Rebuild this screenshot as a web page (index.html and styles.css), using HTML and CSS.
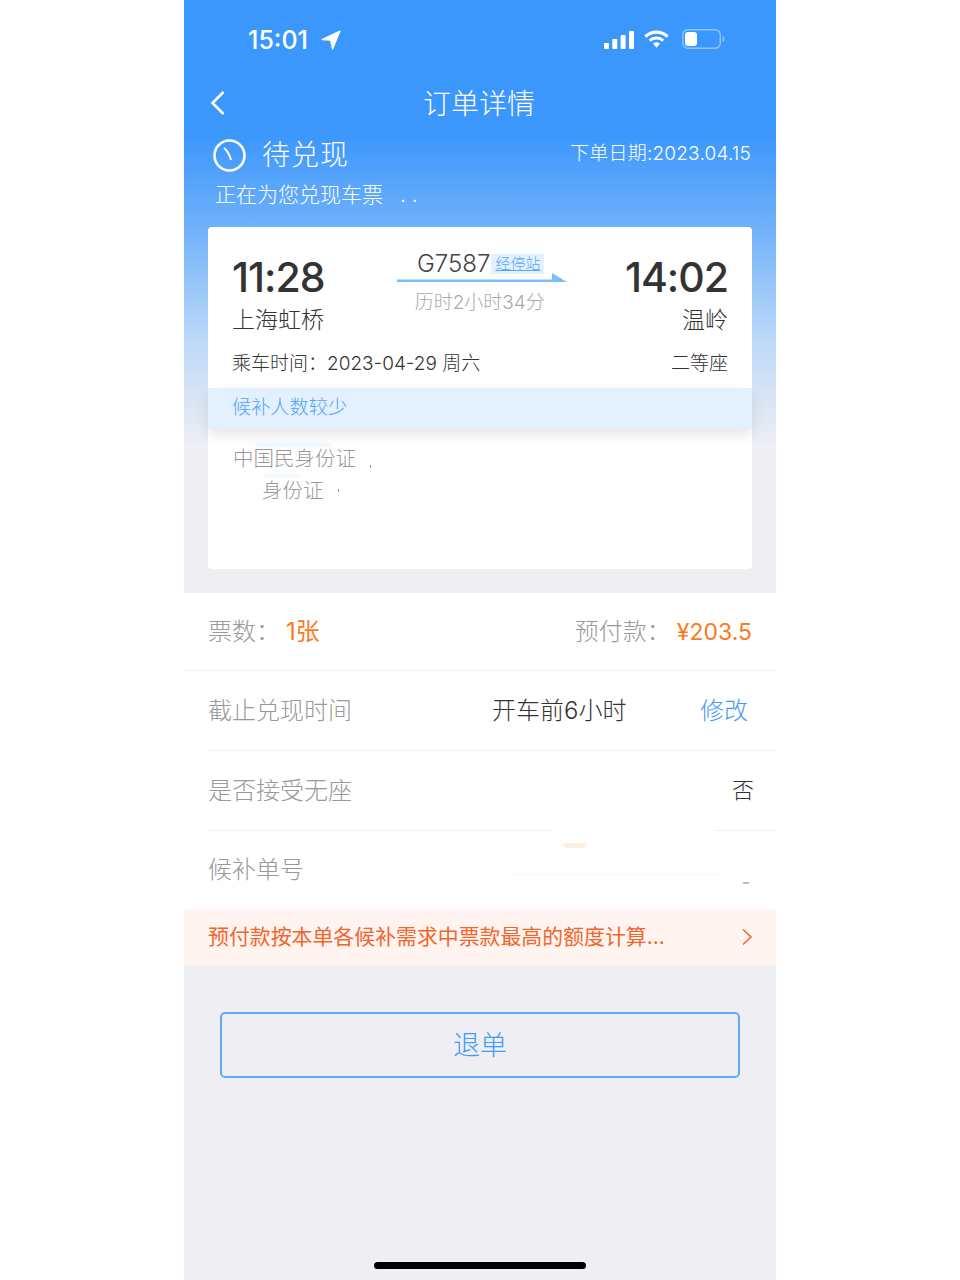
FILE: index.html
```html
<!DOCTYPE html>
<html lang="zh-CN">
<head>
  <meta charset="UTF-8">
  <title>订单详情</title>
  <link rel="stylesheet" href="styles.css">
</head>
<body>
  <div class="phone">
    <div class="status-bar">
      <div class="status-left">
        <span class="clock">15:01</span>
        <svg class="loc" width="20" height="20" viewBox="0 0 20 20"><path d="M19 1 1 9.600l8.600.6L11.600 19z" fill="#fff" stroke="#fff" stroke-width="1.200" stroke-linejoin="round"/></svg>
      </div>
      <div class="status-right">
        <svg class="signal" width="30" height="19" viewBox="0 0 30 19"><g fill="#fff"><rect x="0" y="13" width="5" height="6" rx="1"/><rect x="8.300" y="9" width="5" height="10" rx="1"/><rect x="16.600" y="5" width="5" height="14" rx="1"/><rect x="25" y="1" width="5" height="18" rx="1"/></g></svg>
        <svg class="wifi" width="25" height="20" viewBox="0 0 26 20"><g fill="none" stroke="#fff" stroke-width="3.200"><path d="M1.500 7.500C8 1.300 18 1.300 24.500 7.500"/><path d="M6 11.600c3.900-3.500 10.100-3.500 14 0"/></g><path d="M9.400 14.600c2.200-1.800 5-1.800 7.200 0L13 19z" fill="#fff"/></svg>
        <svg width="43" height="20" viewBox="0 0 43 20"><rect x=".7" y=".7" width="37.600" height="18.600" rx="5" fill="none" stroke="#8fc3fb" stroke-width="1.400"/><rect x="3" y="3" width="12" height="14" rx="3" fill="#fff"/><path d="M40.500 7v6c1.200-.4 2-1.600 2-3s-.8-2.600-2-3z" fill="#8fc3fb"/></svg>
      </div>
    </div>

    <div class="nav">
      <svg class="back" width="16" height="26" viewBox="0 0 16 26"><path d="M13.500 2 2.500 13l11 11" fill="none" stroke="#fff" stroke-width="2.600"/></svg>
      <h1>订单详情</h1>
    </div>

    <div class="order-state">
      <div class="state-left">
        <svg width="33" height="33" viewBox="0 0 33 33"><circle cx="16.500" cy="16.500" r="15" fill="none" stroke="#fff" stroke-width="2.600"/><path d="M11 9c3.200 2.600 5.500 6.500 7 12" fill="none" stroke="#fff" stroke-width="2"/></svg>
        <span class="state-name">待兑现</span>
      </div>
      <span class="order-date">下单日期:2023.04.15</span>
    </div>
    <p class="state-note">正在为您兑现车票 <span class="dots">. .</span></p>

    <div class="ticket">
      <div class="route">
        <div class="stop">
          <div class="time">11:28</div>
          <div class="station">上海虹桥</div>
        </div>
        <div class="train">
          <div class="train-no"><span>G7587</span><span class="stops">经停站</span></div>
          <svg class="arrow" width="170" height="10" viewBox="0 0 170 10"><path d="M0 6.500h155V0l15 9H0z" fill="#7dbcfb"/></svg>
          <div class="duration">历时2小时34分</div>
        </div>
        <div class="stop stop-end">
          <div class="time">14:02</div>
          <div class="station">温岭</div>
        </div>
      </div>
      <div class="ride-info">
        <span>乘车时间：2023-04-29 周六</span>
        <span>二等座</span>
      </div>
      <div class="chance">候补人数较少</div>
      <div class="passengers">
        <div class="id-line">中国民身份证</div>
        <div class="id-line id-short">身份证</div>
      </div>
    </div>

    <div class="rows">
      <div class="row row-first">
        <div><span class="label">票数：</span><span class="orange">1张</span></div>
        <div><span class="label">预付款：</span><span class="orange price">¥203.5</span></div>
      </div>
      <div class="row">
        <span class="label">截止兑现时间</span>
        <span class="limit">开车前6小时</span>
        <span class="edit">修改</span>
      </div>
      <div class="row">
        <span class="label">是否接受无座</span>
        <span class="value">否</span>
      </div>
      <div class="row row-last">
        <span class="label">候补单号</span>
      </div>
    </div>

    <div class="notice">
      <span>预付款按本单各候补需求中票款最高的额度计算...</span>
      <svg width="12" height="18" viewBox="0 0 12 18"><path d="M2 1.500 10 9l-8 7.500" fill="none" stroke="#f2652c" stroke-width="1.600"/></svg>
    </div>

    <div class="actions">
      <button class="refund">退单</button>
    </div>

    <div class="home-bar"></div>

    <!-- leftovers of the blurred-out details -->
    <i class="mark mark-dot1"></i>
    <i class="mark mark-dot2"></i>
    <i class="mark mark-blue1"></i>
    <i class="mark mark-blue2"></i>
    <i class="mark mark-patch"></i>
    <i class="mark mark-peach"></i>
    <i class="mark mark-line"></i>
    <i class="mark mark-dash"></i>
  </div>
</body>
</html>
```

FILE: styles.css
```css
* {
  box-sizing: border-box;
}

body {
  margin: 0;
  background: #fff;
  font-family: Inter, "Noto Sans CJK SC", sans-serif;
  font-weight: 300;
  color: #333;
}

.phone {
  position: relative;
  width: 592px;
  height: 1280px;
  margin: 0 auto;
  overflow: hidden;
  background: linear-gradient(#3c97fd 0, #3c97fd 135px, #6fb0fa 225px, #bcd9f8 340px, #eeeef3 445px);
}

.status-bar {
  display: flex;
  justify-content: space-between;
  align-items: center;
  height: 80px;
  padding: 0 51px 0 64px;
}

.status-left, .status-right {
  display: flex;
  align-items: center;
}

.status-left {
  gap: 13px;
}

.status-right {
  gap: 11px;
  margin-bottom: 2px;
}

.signal {
  margin-right: -1px;
}

.wifi {
  margin-right: 2px;
}

.clock {
  color: #fff;
  font-size: 25px;
  font-weight: 500;
}

.nav {
  position: relative;
  height: 50px;
}

.back {
  position: absolute;
  left: 26px;
  top: 10px;
}

h1 {
  margin: 0;
  padding-right: 2px;
  color: #fff;
  font-size: 28px;
  font-weight: 300;
  line-height: 48px;
  text-align: center;
}

.order-state {
  display: flex;
  justify-content: space-between;
  align-items: flex-start;
  height: 47px;
  margin-top: 1px;
  padding: 0 25px 0 29px;
}

.state-left {
  display: flex;
  align-items: center;
  gap: 16px;
}

.state-name {
  color: #fff;
  font-size: 28px;
  letter-spacing: 1px;
  line-height: 48px;
}

.order-date {
  color: #fff;
  font-size: 19px;
  letter-spacing: .2px;
  line-height: 46px;
}

.state-note {
  margin: 0;
  padding-left: 31px;
  color: #fff;
  font-size: 21px;
  line-height: 34px;
}

.dots {
  margin-left: 11px;
}

.ticket {
  height: 342px;
  margin: 15px 24px 0;
  border-radius: 4px;
  background: #fff;
}

.route {
  display: flex;
  justify-content: space-between;
  height: 117px;
  padding: 24px 24px 0;
}

.time {
  color: #333;
  font-size: 41px;
  font-weight: 500;
  line-height: 53px;
  letter-spacing: -1px;
}

.station {
  font-size: 23px;
  line-height: 32px;
}

.stop-end {
  text-align: right;
}

.train {
  display: flex;
  flex-direction: column;
  align-items: center;
  margin: -1px 0 0 15px;
}

.train-no {
  display: flex;
  align-items: center;
  gap: 1px;
  padding-right: 3px;
  color: #444;
  font-size: 24px;
  line-height: 28px;
}

.stops {
  padding: 0 4px;
  background: #e3f0fd;
  color: #58a5fb;
  font-size: 15px;
  line-height: 20px;
  text-decoration: underline;
}

.arrow {
  display: block;
  margin-top: -5px;
}

.duration {
  margin-top: 7px;
  padding-right: 5px;
  color: #aaa;
  font-size: 19px;
  line-height: 26px;
}

.ride-info {
  display: flex;
  justify-content: space-between;
  height: 44px;
  padding: 4px 24px 0;
  font-size: 19px;
  line-height: 32px;
}

.chance {
  position: relative;
  height: 41px;
  padding-left: 24px;
  background: #e3f0fd;
  box-shadow: 0 6px 14px rgba(0, 0, 0, .1);
  color: #4fa3fb;
  font-size: 19.200px;
  line-height: 38px;
}

.passengers {
  padding-top: 14px;
  color: #999;
  font-size: 20.500px;
  line-height: 32px;
}

.id-line {
  padding-left: 25px;
}

.id-short {
  padding-left: 54px;
}

.rows {
  margin-top: 24px;
  background: #fff;
}

.row {
  display: flex;
  justify-content: space-between;
  align-items: center;
  height: 80px;
  margin-left: 24px;
  padding: 0 24px 5px 0;
  border-bottom: 1px solid #eee;
  font-size: 24px;
}

.row-first {
  height: 78px;
  margin-left: 0;
  padding-left: 24px;
}

.row-last {
  height: 78px;
  padding-bottom: 6px;
  border-bottom: 0;
}

.label {
  color: #999;
}

.orange {
  margin-left: 6px;
  color: #fb7a20;
  font-weight: 400;
}

.price {
  font-size: 23px;
}

.limit {
  margin-left: 140px;
  color: #333;
}

.edit {
  margin: 0 4px 0 auto;
  color: #3f9afc;
}

.value {
  margin-right: -2px;
  color: #333;
  font-size: 22px;
}

.notice {
  display: flex;
  justify-content: space-between;
  align-items: center;
  height: 56px;
  padding: 0 23px 4px 24px;
  background: #fff4ef;
  color: #f2652c;
  font-size: 20.900px;
  font-weight: 400;
}

.notice svg {
  margin-top: 4px;
}

.actions {
  padding: 47px 36px 0;
}

.refund {
  display: block;
  width: 100%;
  height: 66px;
  padding-bottom: 5px;
  border: 2px solid #64aafb;
  border-radius: 5px;
  background: transparent;
  color: #3f9afc;
  font-family: inherit;
  font-size: 27px;
  font-weight: 300;
}

.home-bar {
  position: absolute;
  left: 190px;
  bottom: 11px;
  width: 212px;
  height: 7px;
  border-radius: 4px;
  background: #000;
}

.mark {
  position: absolute;
}

.mark-dot1 {
  left: 186px;
  top: 465px;
  width: 1px;
  height: 3px;
  background: #4fa3fb;
}

.mark-dot2 {
  left: 154px;
  top: 489px;
  width: 1px;
  height: 3px;
  background: #4fa3fb;
}

.mark-blue1 {
  left: 72px;
  top: 443px;
  width: 75px;
  height: 4px;
  background: #eef6fe;
  filter: blur(1px);
}

.mark-blue2 {
  left: 80px;
  top: 474px;
  width: 36px;
  height: 3px;
  background: #eef6fe;
  filter: blur(1px);
}

.mark-patch {
  left: 368px;
  top: 828px;
  width: 163px;
  height: 6px;
  background: #fff;
}

.mark-peach {
  left: 379px;
  top: 843px;
  width: 24px;
  height: 5px;
  border-radius: 0 0 12px 12px;
  background: #fdeee2;
}

.mark-line {
  left: 326px;
  top: 874px;
  width: 210px;
  height: 1px;
  background: #f7f7f7;
}

.mark-dash {
  left: 559px;
  top: 882px;
  width: 6px;
  height: 2px;
  background: #bbb;
}
```
